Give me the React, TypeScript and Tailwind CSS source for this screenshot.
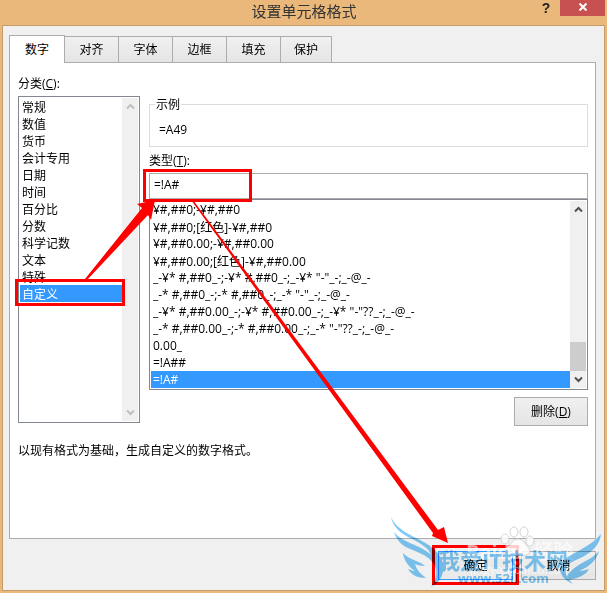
import { useState } from 'react';
import clsx from 'clsx';

const TABS = ['数字', '对齐', '字体', '边框', '填充', '保护'];

const CATEGORIES = [
  '常规',
  '数值',
  '货币',
  '会计专用',
  '日期',
  '时间',
  '百分比',
  '分数',
  '科学记数',
  '文本',
  '特殊',
  '自定义',
];

const FORMATS = [
  '¥#,##0;-¥#,##0',
  '¥#,##0;[红色]-¥#,##0',
  '¥#,##0.00;-¥#,##0.00',
  '¥#,##0.00;[红色]-¥#,##0.00',
  '_-¥* #,##0_-;-¥* #,##0_-;_-¥* "-"_-;_-@_-',
  '_-* #,##0_-;-* #,##0_-;_-* "-"_-;_-@_-',
  '_-¥* #,##0.00_-;-¥* #,##0.00_-;_-¥* "-"??_-;_-@_-',
  '_-* #,##0.00_-;-* #,##0.00_-;_-* "-"??_-;_-@_-',
  '0.00_',
  '=!A##',
  '=!A#',
];

const buttonClass = 'border border-[#acacac] bg-linear-to-b from-[#f0f0f0] to-[#e5e5e5] text-center';
const selectClass = 'min-w-0 flex-1 appearance-none overflow-hidden bg-white outline-none';
const optionClass =
  'h-[17px] min-h-0 px-[2px] py-0 leading-4 checked:bg-[linear-gradient(#3399ff,#3399ff)] checked:[-webkit-text-fill-color:#ffffff]';

const Chevron = ({ up = false }: { up?: boolean }) => (
  <svg width="9" height="7" viewBox="0 0 9 7" fill="none" stroke="currentColor" strokeWidth="2" aria-hidden="true">
    <path d={up ? 'M1 5.5 4.5 2 8 5.5' : 'M1 1.5 4.5 5 8 1.5'} />
  </svg>
);

const ScrollBar = ({ disabled = false }: { disabled?: boolean }) => (
  <div
    className={clsx(
      'flex w-4 shrink-0 flex-col items-center bg-[#f0f0f0]',
      disabled ? 'text-[#bfbfbf]' : 'text-[#505050]'
    )}
  >
    <span className="flex h-[17px] items-center">
      <Chevron up />
    </span>
    <span className="flex-1" />
    {!disabled && <span className="h-[29px] w-full bg-[#cdcdcd]" />}
    <span className="flex h-[17px] items-center">
      <Chevron />
    </span>
  </div>
);

const Annotations = () => (
  <svg className="pointer-events-none absolute top-0 left-0" width="607" height="593" aria-hidden="true">
    <g fill="none" stroke="#ff0000" strokeWidth="3">
      <rect x="144.5" y="170.5" width="106" height="30" />
      <rect x="16.5" y="280.5" width="107" height="24" />
      <rect x="433.5" y="546.5" width="84" height="37" />
    </g>
    <g fill="#ff0000">
      <path d="M85 279 142 208 137 204 155 200 151 220 148 215 87 280Z" />
      <path d="M191 200 193 200 438 530 444 527 448 543 432 536 433 533Z" />
    </g>
  </svg>
);

const Watermark = () => (
  <>
    <div className="pointer-events-none absolute top-[512px] left-[388px] h-[80px] w-[216px]" aria-hidden="true">
      <svg className="absolute inset-0" width="216" height="80">
        <g fill="#ffffff" fillOpacity="0.8" stroke="#d4d4d4" strokeWidth="1">
          <ellipse cx="117" cy="27" rx="4" ry="5" />
          <ellipse cx="126" cy="20" rx="4" ry="5" />
          <ellipse cx="136" cy="20" rx="4" ry="5" />
          <ellipse cx="142" cy="29" rx="4" ry="5" />
          <path d="M130 27C125 27 123 32 120 35 115 41 121 45 130 43 139 45 145 41 140 35 137 32 135 27 130 27Z" />
        </g>
      </svg>
      <div className="absolute top-[26px] left-[78px] flex gap-[10px] text-[20px] leading-7 font-bold whitespace-nowrap text-white/60">
        <span>Baidu</span>
        <span>经验</span>
      </div>
      <div className="absolute top-[48px] left-[82px] text-[12px] leading-5 whitespace-nowrap text-white/60">
        jingyan.baidu.com
      </div>
    </div>
    <div
      className="pointer-events-none absolute top-[512px] left-[388px] h-[80px] w-[216px] text-[#7fcaf8] mix-blend-multiply"
      aria-hidden="true"
    >
      <svg className="absolute inset-0" width="216" height="80" fill="currentColor">
        <path d="M3 5C10 20 27 24 39 32 52 40 59 52 54 63 52 69 48 72 43 75 49 66 50 59 46 52 40 43 29 40 20 36 13 33 8 27 6 20 14 30 28 32 38 39 40 40 42 42 43 43 41 36 32 31 24 27 13 22 5 15 3 5Z" />
        <path d="M15 41C21 48 32 49 37 54 33 54 29 53 27 52 29 59 34 63 38 66 27 66 22 61 20 57 23 58 25 59 27 59 21 55 16 49 15 41Z" />
        <path d="M213 22C211 38 197 44 186 49 177 53 173 60 185 72 171 66 169 55 177 47 186 40 202 35 213 22Z" />
        <path d="M211 39C205 47 193 50 184 58 179 62 178 65 181 68 193 66 199 61 201 57 197 58 194 59 191 59 201 55 209 48 211 39Z" />
      </svg>
      <div className="absolute top-[32px] left-[50px] text-[22px] leading-8 font-bold whitespace-nowrap">
        我爱IT技术网
      </div>
      <div className="absolute top-[56px] left-[70px] text-[13px] leading-5 font-bold whitespace-nowrap">
        www.52il.com
      </div>
    </div>
  </>
);

export default function App() {
  const [tab, setTab] = useState('数字');
  const [category, setCategory] = useState('自定义');
  const [format, setFormat] = useState('=!A#');

  return (
    <div className="relative min-h-screen w-full overflow-hidden bg-[#eab87b] px-[2px] pb-[2px] font-['Open_Sans','Noto_Sans_CJK_SC',sans-serif] text-[12px] leading-[17px] text-black">
      <header className="flex h-[25px] items-start">
        <h1 className="flex-1 pl-[74px] text-center text-[15px] leading-[22px] text-[#333333]">设置单元格格式</h1>
        <button
          type="button"
          aria-label="帮助"
          className="w-7 font-['Liberation_Sans',sans-serif] text-[14px] leading-4 font-bold text-[#222222]"
        >
          ?
        </button>
        <button
          type="button"
          aria-label="关闭"
          className="flex h-4 w-[45px] items-center justify-center bg-[#c75050] pb-[2px] text-white"
        >
          <svg width="8" height="8" viewBox="0 0 8 8" stroke="currentColor" strokeWidth="2" aria-hidden="true">
            <path d="M0.5 0.5 7.5 7.5M7.5 0.5 0.5 7.5" />
          </svg>
        </button>
      </header>

      <main className="border border-[#c69c69] bg-[#f0f0f0] pt-[9px] pr-2 pb-[10px] pl-[6px]">
        <div role="tablist" className="flex items-end">
          {TABS.map((name) => (
            <button
              key={name}
              type="button"
              role="tab"
              aria-selected={tab === name}
              onClick={() => setTab(name)}
              className={clsx(
                'border border-[#acacac]',
                tab === name
                  ? 'z-10 -mb-px h-7 w-14 border-b-0 bg-white'
                  : '-ml-px h-[26px] w-[55px] border-b-0 bg-linear-to-b from-[#f0f0f0] to-[#e5e5e5] last:w-[52px]'
              )}
            >
              {name}
            </button>
          ))}
        </div>

        <section role="tabpanel" className="h-[477px] border border-[#acacac] bg-white pt-3 pr-[7px] pl-2">
          <div className="flex gap-[9px]">
            <div className="flex w-[122px] shrink-0 flex-col">
              <label htmlFor="category">
                分类(<u>C</u>):
              </label>
              <div className="mt-1 flex h-[327px] border border-[#828790] p-px">
                <select
                  id="category"
                  size={12}
                  value={category}
                  onChange={(e) => setCategory(e.target.value)}
                  className={selectClass}
                >
                  {CATEGORIES.map((name) => (
                    <option key={name} className={optionClass}>
                      {name}
                    </option>
                  ))}
                </select>
                <ScrollBar disabled />
              </div>
            </div>

            <div className="flex min-w-0 flex-1 flex-col pt-[21px]">
              <fieldset className="h-[51px] border border-[#dcdcdc] px-[9px] pt-2">
                <legend className="-ml-1 px-px">示例</legend>
                <output>=A49</output>
              </fieldset>
              <label htmlFor="format" className="mt-[5px]">
                类型(<u>T</u>):
              </label>
              <input
                id="format"
                value={format}
                onChange={(e) => setFormat(e.target.value)}
                className="mt-1 h-[26px] border border-[#acacac] bg-white px-1 pb-1 outline-none"
              />
              <div className="flex h-[191px] border border-[#828790] p-px">
                <select
                  aria-label="类型"
                  size={11}
                  value={format}
                  onChange={(e) => setFormat(e.target.value)}
                  className={selectClass}
                >
                  {FORMATS.map((code) => (
                    <option key={code} className={optionClass}>
                      {code}
                    </option>
                  ))}
                </select>
                <ScrollBar />
              </div>
              <button type="button" className={clsx(buttonClass, 'mt-[7px] h-[29px] w-[74px] self-end')}>
                删除(<u>D</u>)
              </button>
            </div>
          </div>
          <p className="mt-4">以现有格式为基础，生成自定义的数字格式。</p>
        </section>

        <footer className="mt-3 flex justify-end gap-2">
          <button type="button" className="h-[29px] w-[75px] border border-[#3399ff] bg-[#eaeaea] text-center">
            确定
          </button>
          <button type="button" className={clsx(buttonClass, 'h-[29px] w-[75px]')}>
            取消
          </button>
        </footer>
      </main>

      <Annotations />
      <Watermark />
    </div>
  );
}
